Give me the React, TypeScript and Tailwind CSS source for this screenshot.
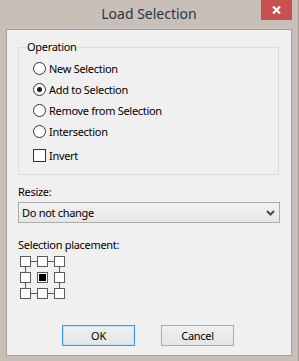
import React from "react";

const font = { fontFamily: '"Noto Sans", "Open Sans", sans-serif' };
const txt = "text-[11px] leading-[16px] tracking-[-0.3px] text-black";

function Radio({ label, checked }: { label: string; checked?: boolean }) {
  return (
    <div className="flex h-[21px] items-center">
      <div className="flex h-[13px] w-[13px] items-center justify-center rounded-full border border-[#333333] bg-white">
        {checked && <div className="h-[5px] w-[5px] rounded-full bg-[#1a1a1a]" />}
      </div>
      <span className={`ml-[3px] ${txt}`}>{label}</span>
    </div>
  );
}

function Sq({ filled }: { filled?: boolean }) {
  return (
    <div className="flex h-[11px] w-[11px] items-center justify-center border border-[#5a5a5a] bg-white">
      {filled && <div className="h-[7px] w-[7px] bg-black" />}
    </div>
  );
}

const H = () => (
  <div className="flex items-center">
    <div className="h-px w-full bg-[#5a5a5a]" />
  </div>
);
const V = () => (
  <div className="flex justify-center">
    <div className="h-full w-px bg-[#5a5a5a]" />
  </div>
);
const E = () => <div />;

export default function App() {
  return (
    <div
      className="flex h-[361px] w-[299px] flex-col border-r border-[#a49c96] bg-[#c8bfb9] px-[6px] pb-[5px]"
      style={font}
    >
      <div className="relative flex h-[29px] shrink-0 items-center justify-center">
        <span className="mt-[-1px] text-[14px] leading-[20px] text-[#2b3645]">Load Selection</span>
        <div className="absolute right-0 top-0 flex h-[20px] w-[31px] items-center justify-center bg-[#c75050]">
          <svg width="9" height="8" viewBox="0 0 9 8">
            <path d="M1 0.5 L8 7.5 M8 0.5 L1 7.5" stroke="white" strokeWidth="2.2" />
          </svg>
        </div>
      </div>
      <div className="flex flex-1 flex-col border border-[#a69e98] bg-[#f0f0f0] px-[11px]">
        <fieldset className="mt-[9px] w-[261px] border border-[#dcdcdc] pb-[8px]">
          <legend className={`ml-[7px] px-[1px] ${txt}`}>Operation</legend>
          <div className="mt-[3px] flex flex-col pl-[14px]">
            <Radio label="New Selection" />
            <Radio label="Add to Selection" checked />
            <Radio label="Remove from Selection" />
            <Radio label="Intersection" />
            <div className="mt-[3px] flex h-[21px] items-center">
              <div className="h-[13px] w-[13px] border border-[#333333] bg-white" />
              <span className={`ml-[3px] ${txt}`}>Invert</span>
            </div>
          </div>
        </fieldset>
        <div className={`mt-[9px] ${txt}`}>Resize:</div>
        <div className="mt-[2px] flex h-[21px] w-[262px] items-center justify-between border border-[#acacac] bg-gradient-to-b from-[#f2f2f2] to-[#e6e6e6] pl-[3px] pr-[3px]">
          <span className={txt}>Do not change</span>
          <svg width="9" height="6" viewBox="0 0 9 6" className="mr-[1px]">
            <path d="M1 1 L4.5 4.5 L8 1" stroke="#4a4a4a" strokeWidth="2" fill="none" />
          </svg>
        </div>
        <div className={`mt-[14px] ${txt}`}>Selection placement:</div>
        <div className="ml-[2px] mt-[3px] grid grid-cols-[11px_6px_11px_6px_11px] grid-rows-[11px_5px_11px_5px_11px]">
          <Sq /><H /><Sq /><H /><Sq />
          <V /><E /><E /><E /><V />
          <Sq /><E /><Sq filled /><E /><Sq />
          <V /><E /><E /><E /><V />
          <Sq /><H /><Sq /><H /><Sq />
        </div>
        <div className="ml-[44px] mt-[26px] flex gap-[26px]">
          <div className={`flex h-[21px] w-[73px] items-center justify-center border border-[#3399ff] bg-gradient-to-b from-[#f0f0f0] to-[#e5e5e5] shadow-[inset_0_0_0_1px_#c8e0f8] ${txt}`}>
            OK
          </div>
          <div className={`flex h-[21px] w-[73px] items-center justify-center border border-[#acacac] bg-gradient-to-b from-[#f0f0f0] to-[#e5e5e5] ${txt}`}>
            Cancel
          </div>
        </div>
      </div>
    </div>
  );
}
